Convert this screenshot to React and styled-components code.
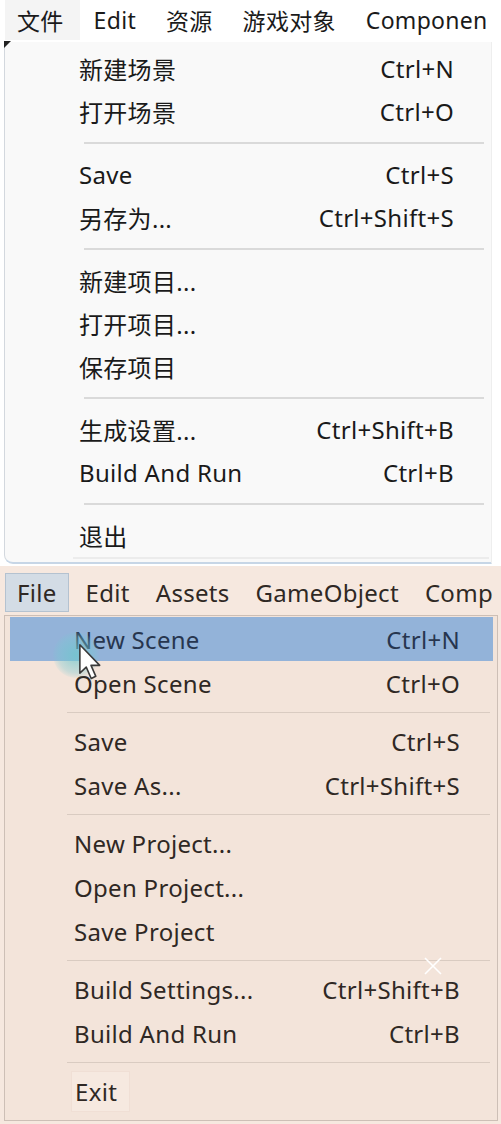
import React from "react";
import styled, { createGlobalStyle, css } from "styled-components";

const GlobalStyle = createGlobalStyle`
  html, body {
    margin: 0;
    padding: 0;
    background: #ffffff;
  }
  body {
    font-family: "Noto Sans", "Noto Sans CJK SC", sans-serif;
    -webkit-font-smoothing: antialiased;
  }
`;

const themes = {
  cn: {
    pageBg: "#ffffff",
    panelBg: "#f9f9f9",
    text: "#1a1a1a",
    line: "#dadada",
    border: "#d3d8de",
    itemH: 43,
    sepH: 20,
    textLeft: 74,
    shortcutRight: 37,
  },
  en: {
    pageBg: "#f6e8df",
    panelBg: "#f3e4da",
    text: "#2f2824",
    line: "#d9cbc1",
    border: "#cdbfb6",
    itemH: 44,
    sepH: 14,
    textLeft: 64,
    shortcutRight: 33,
  },
};

const menus = {
  cn: {
    titles: ["文件", "Edit", "资源", "游戏对象", "Componen"],
    groups: [
      [
        ["新建场景", "Ctrl+N"],
        ["打开场景", "Ctrl+O"],
      ],
      [
        ["Save", "Ctrl+S"],
        ["另存为...", "Ctrl+Shift+S"],
      ],
      [["新建项目..."], ["打开项目..."], ["保存项目"]],
      [
        ["生成设置...", "Ctrl+Shift+B"],
        ["Build And Run", "Ctrl+B"],
      ],
      [["退出"]],
    ],
  },
  en: {
    titles: ["File", "Edit", "Assets", "GameObject", "Comp"],
    groups: [
      [
        ["New Scene", "Ctrl+N"],
        ["Open Scene", "Ctrl+O"],
      ],
      [
        ["Save", "Ctrl+S"],
        ["Save As...", "Ctrl+Shift+S"],
      ],
      [["New Project..."], ["Open Project..."], ["Save Project"]],
      [
        ["Build Settings...", "Ctrl+Shift+B"],
        ["Build And Run", "Ctrl+B"],
      ],
      [["Exit"]],
    ],
  },
};

export default function App() {
  return (
    <>
      <GlobalStyle />
      <Page>
        <MenuSection lang="cn" />
        <MenuSection lang="en" />
      </Page>
    </>
  );
}

function MenuSection({ lang }) {
  const t = themes[lang];
  const m = menus[lang];
  return (
    <Section $t={t} $lang={lang}>
      <MenuBar $lang={lang}>
        {m.titles.map((title, i) => (
          <MenuTitle key={title} $lang={lang} $active={i === 0}>
            {title}
          </MenuTitle>
        ))}
      </MenuBar>
      <Dropdown $t={t} $lang={lang}>
        {lang === "cn" && <CornerMark />}
        {m.groups.map((group, gi) => (
          <React.Fragment key={gi}>
            {gi > 0 && <Separator $t={t} $lang={lang} />}
            {group.map(([label, shortcut], ii) => (
              <Item
                key={label}
                $t={t}
                $highlight={lang === "en" && gi === 0 && ii === 0}
                $boxed={lang === "en" && label === "Exit"}
              >
                <span>{label}</span>
                {shortcut && <Shortcut>{shortcut}</Shortcut>}
              </Item>
            ))}
          </React.Fragment>
        ))}
        {lang === "cn" && <BottomEdge />}
        {lang === "en" && (
          <>
            <Glow />
            <Cursor viewBox="0 0 14 22">
              <path
                d="M1 1 L1 17 L4.6 13.6 L7.4 20 L10 18.8 L7.3 12.6 L12.2 12.6 Z"
                fill="#ffffff"
                stroke="#3a3a3a"
                strokeWidth="0.9"
                strokeLinejoin="round"
              />
            </Cursor>
            <CloseMark viewBox="0 0 20 20">
              <path d="M2 2 L18 18 M18 2 L2 18" stroke="#ffffff" strokeWidth="1.6" />
            </CloseMark>
          </>
        )}
      </Dropdown>
    </Section>
  );
}

const Page = styled.div`
  width: 501px;
  height: 1124px;
  display: flex;
  flex-direction: column;
  overflow: hidden;
`;

const Section = styled.section`
  background: ${({ $t }) => $t.pageBg};
  color: ${({ $t }) => $t.text};
  font-size: 24px;
  letter-spacing: 0.3px;
  ${({ $lang }) =>
    $lang === "cn"
      ? css`
          height: 566px;
        `
      : css`
          flex: 1;
          padding-top: 7px;
        `}
`;

const MenuBar = styled.nav`
  display: flex;
  align-items: stretch;
  white-space: nowrap;
  padding-left: 5px;
  height: ${({ $lang }) => ($lang === "cn" ? 40 : 39)}px;
`;

const MenuTitle = styled.div`
  display: flex;
  align-items: center;
  box-sizing: border-box;
  padding: 0 13px;
  ${({ $lang }) =>
    $lang === "cn" &&
    css`
      font-size: 23px;
      padding: 0 16px 0 14px;
      &:first-child {
        padding-left: 12px;
      }
    `}
  ${({ $active, $lang }) =>
    $active &&
    ($lang === "cn"
      ? css`
          background: #f4f4f4;
        `
      : css`
          background: #d3dce5;
          border: 1px solid #b4c2d0;
          padding: 0 11px;
          margin-right: 4px;
        `)}
`;

const Dropdown = styled.div`
  position: relative;
  box-sizing: border-box;
  background: ${({ $t }) => $t.panelBg};
  display: flex;
  flex-direction: column;
  ${({ $lang, $t }) =>
    $lang === "cn"
      ? css`
          margin: 2px 9px 0 4px;
          height: 522px;
          padding-top: 5px;
          border-left: 1px solid ${$t.border};
          border-right: 1px solid #eeeeee;
          border-bottom: 2px solid #c7d6e6;
          border-bottom-left-radius: 9px;
        `
      : css`
          margin: 3px 3px 0 4px;
          height: 506px;
          padding: 1px 4px 0 5px;
          border: 1px solid ${$t.border};
        `}
`;

const CornerMark = styled.div`
  position: absolute;
  left: -1px;
  top: -1px;
  width: 0;
  height: 0;
  border-top: 7px solid #222;
  border-right: 7px solid transparent;
`;

const BottomEdge = styled.div`
  position: absolute;
  left: 68px;
  right: 2px;
  bottom: 3px;
  height: 2px;
  background: #ececec;
`;

const Item = styled.div`
  display: flex;
  align-items: center;
  justify-content: space-between;
  white-space: nowrap;
  height: ${({ $t }) => $t.itemH}px;
  padding-left: ${({ $t }) => $t.textLeft}px;
  padding-right: ${({ $t }) => $t.shortcutRight}px;
  ${({ $highlight }) =>
    $highlight &&
    css`
      background: #93b3d9;
      color: #27364f;
    `}
  ${({ $boxed }) =>
    $boxed &&
    css`
      span {
        margin-left: -3px;
        padding: 3px 12px 3px 3px;
        border: 1px solid #f0dfd5;
        background: #f6e9e0;
      }
    `}
`;

const Shortcut = styled.span``;

const Separator = styled.div`
  height: ${({ $t }) => $t.sepH}px;
  display: flex;
  align-items: center;
  &::before {
    content: "";
    flex: 1;
    background: ${({ $t }) => $t.line};
    ${({ $lang }) =>
      $lang === "cn"
        ? css`
            height: 2px;
            margin: 0 7px 0 79px;
          `
        : css`
            height: 1px;
            margin: 0 3px 0 57px;
          `}
  }
`;

const Glow = styled.div`
  position: absolute;
  left: 48px;
  top: 16px;
  width: 46px;
  height: 46px;
  border-radius: 50%;
  background: radial-gradient(circle, rgba(110, 200, 205, 0.75) 0%, rgba(120, 200, 210, 0.35) 55%, rgba(120, 200, 210, 0) 75%);
  pointer-events: none;
`;

const Cursor = styled.svg`
  position: absolute;
  left: 73px;
  top: 27px;
  width: 25px;
  height: 39px;
  pointer-events: none;
`;

const CloseMark = styled.svg`
  position: absolute;
  left: 418px;
  top: 340px;
  width: 20px;
  height: 20px;
  pointer-events: none;
`;
